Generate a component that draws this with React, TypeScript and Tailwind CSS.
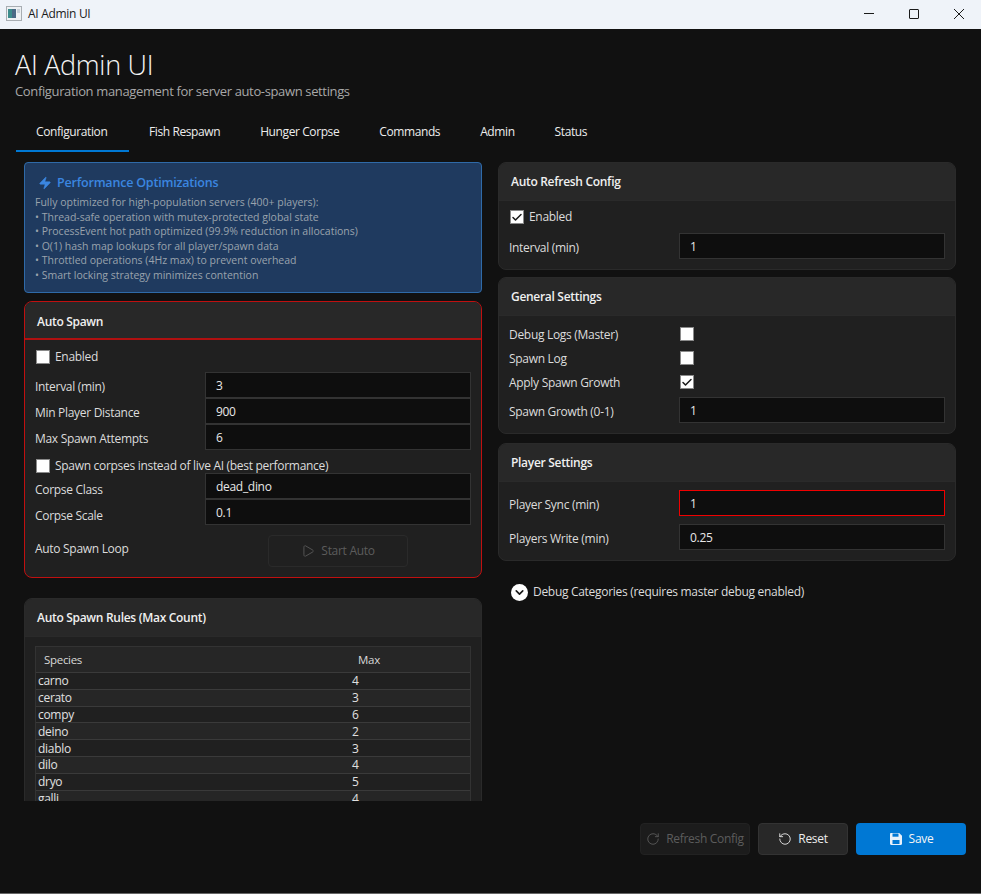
import { Check, ChevronDown, Play, RotateCcw, RotateCw, Zap } from "lucide-react";
import type { ReactNode } from "react";

const TABS = ["Configuration", "Fish Respawn", "Hunger Corpse", "Commands", "Admin", "Status"];

const RULES = [
  ["carno", "4"],
  ["cerato", "3"],
  ["compy", "6"],
  ["deino", "2"],
  ["diablo", "3"],
  ["dilo", "4"],
  ["dryo", "5"],
  ["galli", "4"],
];

const PERF_LINES = [
  "Fully optimized for high-population servers (400+ players):",
  "• Thread-safe operation with mutex-protected global state",
  "• ProcessEvent hot path optimized (99.9% reduction in allocations)",
  "• O(1) hash map lookups for all player/spawn data",
  "• Throttled operations (4Hz max) to prevent overhead",
  "• Smart locking strategy minimizes contention",
];

function Card({ title, danger, className, children }: { title: string; danger?: boolean; className?: string; children: ReactNode }) {
  return (
    <section
      className={`rounded-[8px] border bg-[#202020] overflow-hidden ${
        danger ? "border-[#c01010]" : "border-[#2a2a2a]"
      } ${className ?? ""}`}
    >
      <div
        className={`h-[38px] flex items-center px-[12px] bg-[#282828] text-[12px] font-semibold text-[#f0f0f0] ${
          danger ? "pt-[3px] border-b-2 border-[#b01010]" : "border-b border-[#2a2a2a]"
        }`}
      >
        {title}
      </div>
      {children}
    </section>
  );
}

function Box({ checked }: { checked?: boolean }) {
  return (
    <span className="w-[14px] h-[14px] shrink-0 bg-white border border-[#8a8a8a] flex items-center justify-center">
      {checked && <Check size={13} strokeWidth={3} className="text-[#1a1a1a]" />}
    </span>
  );
}

function TextBox({ value, danger }: { value: string; danger?: boolean }) {
  return (
    <div
      className={`flex-1 h-[26px] flex items-center pl-[10px] pt-[1px] bg-[#0e0e0e] border text-[12px] text-[#e8e8e8] ${
        danger ? "border-[#f00000]" : "border-[#333333]"
      }`}
    >
      {value}
    </div>
  );
}

function Field({ label, value, danger, className, labelClass }: { label: string; value: string; danger?: boolean; className?: string; labelClass?: string }) {
  return (
    <div className={`flex items-center ${className ?? ""}`}>
      <span className={`w-[170px] shrink-0 text-[12px] text-[#dcdcdc] ${labelClass ?? "pt-[3px]"}`}>{label}</span>
      <TextBox value={value} danger={danger} />
    </div>
  );
}

function CheckRow({ label, checked, className }: { label: string; checked?: boolean; className?: string }) {
  return (
    <div className={`flex items-center gap-[5px] pl-[1px] h-[14px] text-[12px] text-[#dcdcdc] ${className ?? ""}`}>
      <Box checked={checked} />
      <span>{label}</span>
    </div>
  );
}

function BoxField({ label, checked }: { label: string; checked?: boolean }) {
  return (
    <div className="flex items-center h-[14px] mb-[10px] text-[12px] text-[#dcdcdc]">
      <span className="w-[171px] shrink-0 pt-[2px]">{label}</span>
      <Box checked={checked} />
    </div>
  );
}

function WindowIcon() {
  return (
    <svg width="16" height="15" viewBox="0 0 16 15" className="shrink-0">
      <rect x="0.5" y="0.5" width="15" height="14" fill="#eef1f4" stroke="#a8adb2" />
      <rect x="2" y="3" width="4" height="9" fill="#3c8c8c" />
      <rect x="6" y="3" width="4" height="9" fill="#4a6a86" />
      <rect x="11" y="3" width="3" height="4" fill="#c9d2da" />
    </svg>
  );
}

function SaveIcon() {
  return (
    <svg width="14" height="14" viewBox="0 0 14 14" fill="none">
      <path d="M1 2.2C1 1.5 1.5 1 2.2 1h8L13 3.8v8c0 .7-.5 1.2-1.2 1.2H2.2C1.5 13 1 12.500 1 11.800Z" fill="#e8f1fa" />
      <rect x="3.500" y="1.500" width="6" height="3.200" fill="#0078d4" />
      <rect x="3.500" y="8" width="7" height="4" fill="#0078d4" />
    </svg>
  );
}

export default function App() {
  return (
    <div className="w-[981px] h-[894px] flex flex-col overflow-hidden bg-[#111111] border-b border-[#666666] tracking-[-0.3px] font-['Open_Sans',sans-serif]">
      <header className="h-[29px] shrink-0 flex items-center bg-[#eff3f9] pl-[6px] pb-[2px]">
        <WindowIcon />
        <span className="ml-[6px] text-[12px] text-[#1a1a1a]">AI Admin UI</span>
        <div className="ml-auto flex items-center text-[#1a1a1a]">
          <span className="w-[45px] flex justify-center">
            <span className="w-[10px] h-[1px] bg-[#1a1a1a]" />
          </span>
          <span className="w-[45px] flex justify-center">
            <span className="w-[10px] h-[10px] border border-[#1a1a1a] rounded-[1px]" />
          </span>
          <span className="w-[45px] flex justify-center">
            <svg width="10" height="10" viewBox="0 0 10 10" stroke="#1a1a1a" strokeWidth="1">
              <path d="M0 0l10 10M10 0L0 10" />
            </svg>
          </span>
        </div>
      </header>

      <div className="pl-[15px] pt-[18px] h-[85px] shrink-0">
        <h1 className="text-[27px] leading-[36px] font-light text-[#f5f5f5]">AI Admin UI</h1>
        <p className="text-[13px] leading-[17px] tracking-[-0.36px] text-[#a8a8a8]">Configuration management for server auto-spawn settings</p>
      </div>

      <nav className="ml-[16px] h-[37px] mt-[1px] shrink-0 flex">
        {TABS.map((tab, i) => (
          <div
            key={tab}
            className={`px-[20px] h-[37px] pb-[2px] flex items-center text-[12px] tracking-[-0.4px] text-[#ededed] border-b-2 ${
              i === 0 ? "w-[113px] border-[#0078d4]" : "border-transparent"
            }`}
          >
            {tab}
          </div>
        ))}
      </nav>

      <main className="mt-[10px] h-[639px] shrink-0 overflow-hidden flex gap-[16px] pl-[24px] pr-[25px]">
        <div className="w-[458px] shrink-0 flex flex-col">
          <section className="h-[131px] shrink-0 rounded-[4px] border border-[#2f6aa8] bg-[#1f3a5f] pl-[10px] pt-[12px]">
            <div className="flex items-center gap-[5px] pl-[3px] h-[16px] text-[12.500px] tracking-[-0.2px] font-semibold text-[#3b86e0]">
              <Zap size={14} fill="#3b86e0" strokeWidth={1} />
              <span>Performance Optimizations</span>
            </div>
            <div className="mt-[4px] text-[10.500px] leading-[14.600px] tracking-normal text-[#9aa3ad]">
              {PERF_LINES.map((line) => (
                <p key={line}>{line}</p>
              ))}
            </div>
          </section>

          <Card title="Auto Spawn" danger className="h-[277px] mt-[8px] shrink-0">
            <div className="px-[10px]">
              <CheckRow label="Enabled" className="mt-[10px] mb-[8px]" />
              <Field label="Interval (min)" value="3" />
              <Field label="Min Player Distance" value="900" />
              <Field label="Max Spawn Attempts" value="6" />
              <CheckRow label="Spawn corpses instead of live AI (best performance)" className="mt-[9px]" />
              <Field label="Corpse Class" value="dead_dino" labelClass="pt-[7px]" />
              <Field label="Corpse Scale" value="0.1" labelClass="pt-[7px]" />
              <div className="flex items-center mt-[10px]">
                <span className="w-[170px] shrink-0 text-[12px] text-[#dcdcdc] -mt-[4px]">Auto Spawn Loop</span>
                <div className="flex-1 flex justify-center">
                  <div className="w-[140px] h-[32px] rounded-[4px] border border-[#2a2a2a] flex items-center justify-center gap-[6px] text-[12px] text-[#5c5c5c]">
                    <Play size={14} strokeWidth={1.5} />
                    <span>Start Auto</span>
                  </div>
                </div>
              </div>
            </div>
          </Card>

          <Card title="Auto Spawn Rules (Max Count)" className="mt-[20px] shrink-0 rounded-b-none">
            <div className="px-[10px] pt-[9px]">
              <div className="border border-[#333333]">
                <div className="flex items-center h-[25px] bg-[#262626] text-[11.500px] text-[#d8d8d8]">
                  <span className="w-[322px] pl-[8px]">Species</span>
                  <span>Max</span>
                </div>
                {RULES.map(([name, max], i) => (
                  <div
                    key={name}
                    className={`flex items-center h-[16.800px] pt-[1px] border-t border-[#3a3a3a] text-[12px] text-[#e0e0e0] ${
                      i % 2 ? "bg-[#262626]" : "bg-[#202020]"
                    }`}
                  >
                    <span className="w-[316px] pl-[2px]">{name}</span>
                    <span>{max}</span>
                  </div>
                ))}
              </div>
            </div>
          </Card>
        </div>

        <div className="w-[458px] shrink-0 flex flex-col">
          <Card title="Auto Refresh Config" className="h-[108px] shrink-0">
            <div className="px-[10px]">
              <CheckRow label="Enabled" checked className="mt-[9px] mb-[9px]" />
              <Field label="Interval (min)" value="1" />
            </div>
          </Card>

          <Card title="General Settings" className="h-[157px] mt-[7px] shrink-0">
            <div className="px-[10px] pt-[11px]">
              <BoxField label="Debug Logs (Master)" />
              <BoxField label="Spawn Log" />
              <BoxField label="Apply Spawn Growth" checked />
              <Field label="Spawn Growth (0-1)" value="1" className="-mt-[2px]" />
            </div>
          </Card>

          <Card title="Player Settings" className="h-[118px] mt-[9px] shrink-0">
            <div className="px-[10px] pt-[8px]">
              <Field label="Player Sync (min)" value="1" danger />
              <Field label="Players Write (min)" value="0.25" className="mt-[8px]" />
            </div>
          </Card>

          <div className="mt-[22px] ml-[13px] flex items-center gap-[5px] text-[12px] text-[#dcdcdc]">
            <span className="w-[17px] h-[17px] rounded-full bg-white flex items-center justify-center">
              <ChevronDown size={13} strokeWidth={3} className="text-[#1a1a1a]" />
            </span>
            <span>Debug Categories (requires master debug enabled)</span>
          </div>
        </div>
      </main>

      <footer className="flex justify-end items-start gap-[8px] pr-[15px] pt-[22px]">
        <div className="w-[110px] h-[32px] rounded-[4px] bg-[#1c1c1c] border border-[#222222] flex items-center justify-center gap-[6px] text-[12px] text-[#5c5c5c]">
          <RotateCw size={14} strokeWidth={1.5} />
          <span>Refresh Config</span>
        </div>
        <div className="w-[90px] h-[32px] rounded-[4px] bg-[#282828] border border-[#333333] flex items-center justify-center gap-[6px] text-[12px] text-[#ededed]">
          <RotateCcw size={14} strokeWidth={1.5} />
          <span>Reset</span>
        </div>
        <div className="w-[110px] h-[32px] rounded-[4px] bg-[#0078d4] flex items-center justify-center gap-[6px] text-[12px] font-medium text-[#f5f5f5]">
          <SaveIcon />
          <span>Save</span>
        </div>
      </footer>
    </div>
  );
}
